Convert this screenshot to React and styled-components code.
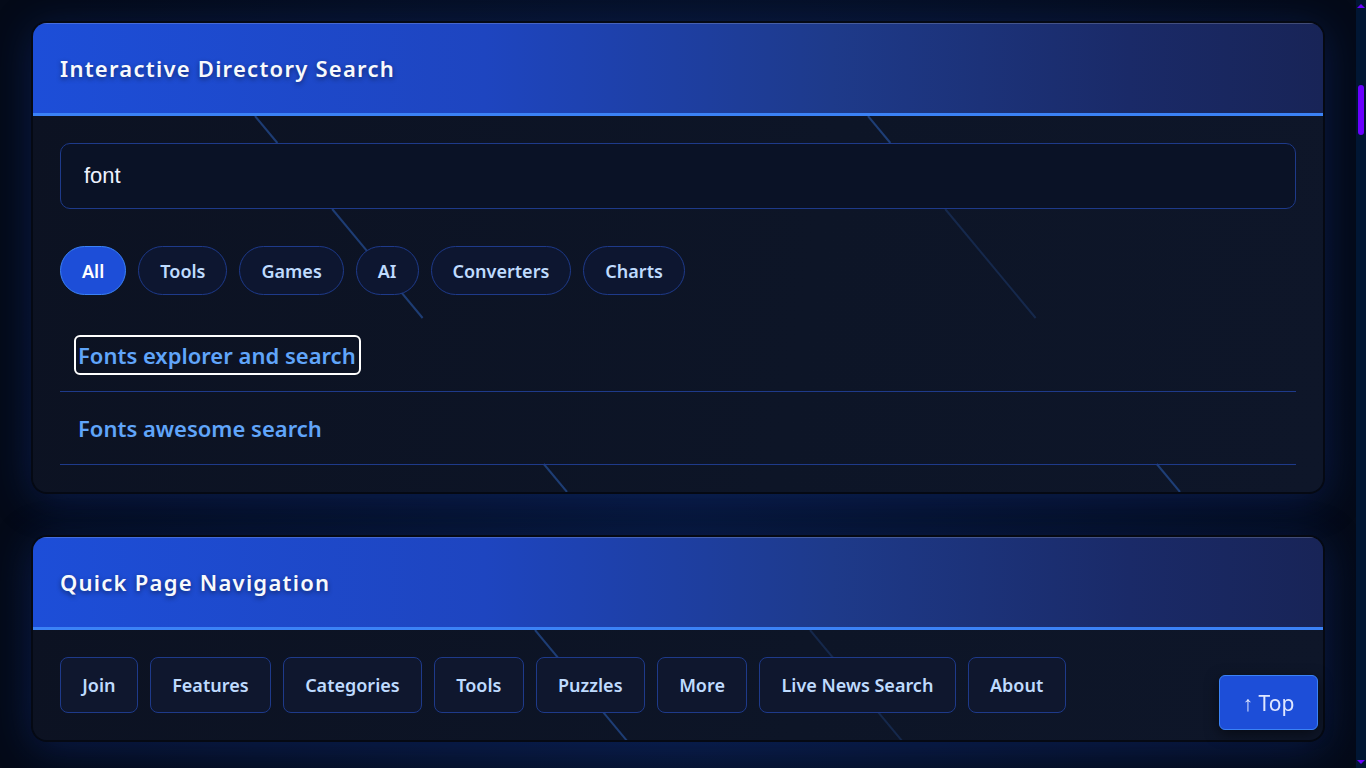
import styled, { createGlobalStyle } from "styled-components";

const GlobalStyle = createGlobalStyle`
  html {
    background: #040a18;
    scrollbar-width: none;
  }
  body {
    margin: 0;
    min-height: 260vh;
    background: radial-gradient(ellipse at 50% 30%, #071534 0%, #040a18 70%);
    font-family: "Noto Sans", "Open Sans", sans-serif;
    color: #e5e7eb;
  }
  ::-webkit-scrollbar {
    display: none;
  }
`;

const filters = ["All", "Tools", "Games", "AI", "Converters", "Charts"];
const results = ["Fonts explorer and search", "Fonts awesome search"];
const navLinks = ["Join", "Features", "Categories", "Tools", "Puzzles", "More", "Live News Search", "About"];

// slope of the decorative streaks (x per y)
const SLOPE = 312 / 376;

const Page = styled.main`
  display: flex;
  flex-direction: column;
  gap: 45px;
  padding: 23px 43px 23px 33px;
`;

const Card = styled.section`
  border-radius: 14px;
  overflow: hidden;
  background: linear-gradient(100deg, #0c1222 0%, #0d1527 60%, #0e1629 100%);
  box-shadow: 0 0 0 2px #050913, 0 6px 40px rgba(20, 60, 170, 0.35);
`;

const CardHeader = styled.header`
  height: 90px;
  display: flex;
  align-items: center;
  padding: 0 27px;
  background: linear-gradient(90deg, #1d4ed8 0%, #1e45c0 35%, #1e3a8a 62%, #1a2a68 85%, #182457 100%);
  border-bottom: 3px solid #3b82f6;
  box-shadow: inset 0 1px 0 rgba(255, 255, 255, 0.18);
`;

const Title = styled.h2`
  margin: 0;
  font-size: 22px;
  font-weight: 600;
  letter-spacing: 1.25px;
  color: #f8fafc;
  text-shadow: 0 2px 5px rgba(0, 0, 0, 0.45);
`;

const CardBody = styled.div`
  position: relative;
  padding: 27px;
`;

const Streaks = styled.svg`
  position: absolute;
  inset: 0;
  width: 100%;
  height: 100%;
  pointer-events: none;
`;

const Content = styled.div`
  position: relative;
  display: flex;
  flex-direction: column;
`;

const SearchInput = styled.input`
  box-sizing: border-box;
  width: 100%;
  height: 66px;
  padding: 0 23px;
  background: #0a1226;
  border: 1px solid #1e3a8a;
  border-radius: 10px;
  color: #eef2ff;
  font-family: "Liberation Sans", Arial, sans-serif;
  font-size: 22px;
  outline: none;
`;

const Filters = styled.div`
  display: flex;
  gap: 12px;
  margin-top: 37px;
`;

const Pill = styled.button`
  height: 49px;
  padding: 0 21px;
  border-radius: 25px;
  border: 1px solid ${(p) => (p.active ? "#3b82f6" : "#1e3a8a")};
  background: ${(p) => (p.active ? "#1d4ed8" : "#0d1630")};
  color: ${(p) => (p.active ? "#ffffff" : "#bfdbfe")};
  font-family: inherit;
  font-size: 18px;
  font-weight: 600;
`;

const ResultList = styled.ul`
  list-style: none;
  margin: 24px 0 0;
  padding: 0;
`;

const ResultRow = styled.li`
  padding: 18px 16px;
  border-bottom: 1px solid #1e3a8a;
`;

const ResultLink = styled.a`
  display: inline-block;
  padding: 0 3px 0 2px;
  line-height: 36px;
  border-radius: 4px;
  color: #60a5fa;
  font-size: 22px;
  font-weight: 600;
  text-decoration: none;
  outline: ${(p) => (p.focused ? "2px solid #ffffff" : "none")};
`;

const NavRow = styled.nav`
  display: flex;
  gap: 12px;
`;

const NavButton = styled.a`
  display: flex;
  align-items: center;
  height: 56px;
  box-sizing: border-box;
  padding: 0 21.3px;
  border: 1px solid #1e3a8a;
  border-radius: 8px;
  background: #0f172e;
  color: #bfdbfe;
  font-size: 18px;
  font-weight: 600;
  text-decoration: none;
`;

const TopButton = styled.button`
  position: fixed;
  right: 48px;
  bottom: 38px;
  width: 99px;
  height: 55px;
  border: 1px solid #3b82f6;
  border-radius: 6px;
  background: #1d4ed8;
  color: #e0e7ff;
  font-family: inherit;
  font-size: 21px;
  box-shadow: 0 4px 14px rgba(0, 0, 0, 0.5);
`;

const ScrollTrack = styled.div`
  position: fixed;
  top: 0;
  right: 0;
  bottom: 0;
  width: 10px;
  background: #011633;
  display: flex;
  flex-direction: column;
  align-items: center;
  justify-content: space-between;
  padding: 4px 0;
  box-sizing: border-box;
`;

const ScrollArrow = styled.span`
  width: 0;
  height: 0;
  border-left: 4px solid transparent;
  border-right: 4px solid transparent;
  ${(p) => (p.down ? "border-top: 4px solid #6a00ff;" : "border-bottom: 4px solid #6a00ff;")}
`;

const ScrollThumb = styled.span`
  width: 6px;
  height: 50px;
  border-radius: 3px;
  background: #6a00ff;
  margin-top: 77px;
  margin-bottom: auto;
`;

const Streak = ({ x, height, gaps = [], faint = [] }) => {
  // one diagonal line, skipping the y ranges in gaps
  const segs = [];
  let start = 0;
  gaps.forEach(([a, b]) => {
    segs.push([start, a]);
    start = b;
  });
  segs.push([start, height]);
  return segs.map(([a, b], i) => (
    <line
      key={a}
      x1={x + a * SLOPE}
      y1={a}
      x2={x + b * SLOPE}
      y2={b}
      stroke={faint.includes(i) ? "rgba(59,130,246,0.18)" : "rgba(59,130,246,0.38)"}
      strokeWidth="2"
    />
  ));
};

const App = () => {
  return (
    <>
      <GlobalStyle />
      <Page>
        <Card>
          <CardHeader>
            <Title>Interactive Directory Search</Title>
          </CardHeader>
          <CardBody>
            <Streaks>
              <Streak x={222} height={376} gaps={[[27, 93], [202, 348]]} />
              <Streak x={835} height={376} gaps={[[27, 93], [202, 348]]} faint={[1]} />
            </Streaks>
            <Content>
              <SearchInput defaultValue="font" />
              <Filters>
                {filters.map((f) => (
                  <Pill key={f} active={f === "All"}>{f}</Pill>
                ))}
              </Filters>
              <ResultList>
                {results.map((r, i) => (
                  <ResultRow key={r}>
                    <ResultLink href="#" focused={i === 0}>{r}</ResultLink>
                  </ResultRow>
                ))}
              </ResultList>
            </Content>
          </CardBody>
        </Card>
        <Card>
          <CardHeader>
            <Title>Quick Page Navigation</Title>
          </CardHeader>
          <CardBody>
            <Streaks>
              <Streak x={502} height={112} />
              <Streak x={777} height={112} faint={[0]} />
            </Streaks>
            <Content>
              <NavRow>
                {navLinks.map((n) => (
                  <NavButton key={n} href="#">{n}</NavButton>
                ))}
              </NavRow>
            </Content>
          </CardBody>
        </Card>
      </Page>
      <TopButton>↑ Top</TopButton>
      <ScrollTrack>
        <ScrollArrow />
        <ScrollThumb />
        <ScrollArrow down />
      </ScrollTrack>
    </>
  );
};

export default App;
